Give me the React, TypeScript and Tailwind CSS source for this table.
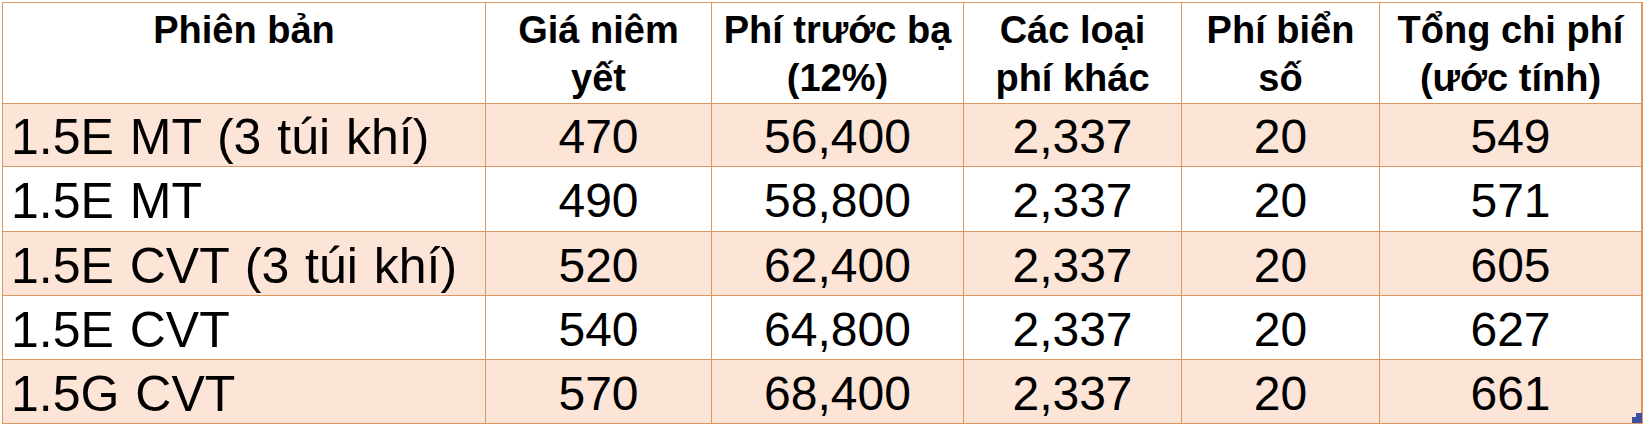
const rows = [
  { name: "1.5E MT (3 túi khí)", price: "470", tax: "56,400", other: "2,337", plate: "20", total: "549", h: "h-[62px]" },
  { name: "1.5E MT", price: "490", tax: "58,800", other: "2,337", plate: "20", total: "571", h: "h-[64px]" },
  { name: "1.5E CVT (3 túi khí)", price: "520", tax: "62,400", other: "2,337", plate: "20", total: "605", h: "h-[63px]" },
  { name: "1.5E CVT", price: "540", tax: "64,800", other: "2,337", plate: "20", total: "627", h: "h-[63px]" },
  { name: "1.5G CVT", price: "570", tax: "68,400", other: "2,337", plate: "20", total: "661", h: "h-[63px]" },
]

const headers = [
  ["Phiên bản", ""],
  ["Giá niêm", "yết"],
  ["Phí trước bạ", "(12%)"],
  ["Các loại", "phí khác"],
  ["Phí biển", "số"],
  ["Tổng chi phí", "(ước tính)"],
]

export default function App() {
  return (
    <div className="bg-white w-[1643px] h-[425px] pt-[2px] pl-[2px] font-['Liberation_Sans',Arial,sans-serif] text-black">
      <div className="relative w-[1641px] bg-[#dc9862] p-px grid grid-cols-[482px_225px_251px_217px_197px_261px] gap-px">
        {headers.map(([a, b], i) => (
          <div key={i} className="bg-white h-[100px] pt-[3px] flex flex-col items-center text-[38px] leading-[48px] font-bold whitespace-nowrap">
            <span>{a}</span>
            <span>{b}</span>
          </div>
        ))}

        {rows.map((r, i) => {
          const bg = i % 2 === 0 ? "bg-[#fce4d6]" : "bg-white"
          const cell = `${bg} ${r.h} flex items-center justify-center pt-1 text-[48px] leading-none whitespace-nowrap`
          return [
            <div key={`${i}-n`} className={`${bg} ${r.h} flex items-center pl-[8px] pt-1 text-[50px] leading-none whitespace-nowrap [word-spacing:2px]`}>
              {r.name}
            </div>,
            <div key={`${i}-p`} className={cell}>{r.price}</div>,
            <div key={`${i}-t`} className={cell}>{r.tax}</div>,
            <div key={`${i}-o`} className={cell}>{r.other}</div>,
            <div key={`${i}-b`} className={cell}>{r.plate}</div>,
            <div key={`${i}-s`} className={cell}>{r.total}</div>,
          ]
        })}

        {/* fill handle */}
        <svg className="absolute left-[1630px] top-[411px]" width="10" height="10" viewBox="0 0 10 10">
          <path d="M4 0H10V10H0V4H4Z" fill="#3f4f9e" />
        </svg>
      </div>
    </div>
  )
}
